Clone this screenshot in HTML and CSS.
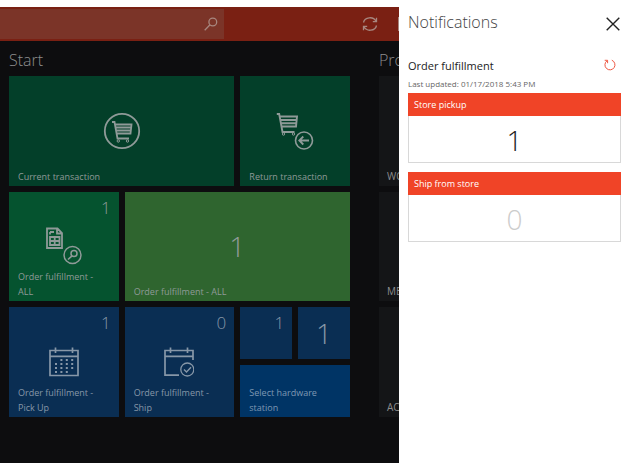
FILE: index.html
```html
<!DOCTYPE html>
<html lang="en">
<head>
<meta charset="utf-8">
<meta name="viewport" content="width=device-width, initial-scale=1">
<title>Store operations</title>
<link rel="stylesheet" href="styles.css">
</head>
<body>
<div class="app">
  <header class="topbar">
    <form class="search">
      <input class="search-input" type="search" aria-label="Search">
      <button class="search-button" type="submit" aria-label="Search">
        <svg width="14" height="14" viewBox="0 0 14 14"><circle cx="8.8" cy="5" r="3.9"/><path d="M6 7.8L.7 13.2"/></svg>
      </button>
    </form>
    <button class="sync" type="button" aria-label="Sync">
      <svg width="16" height="16" viewBox="0 0 16 16"><path d="M1.5 6.5A6.6 5.8 0 0 1 14 5.2M14.5 1.8V5.6H10.8M14.5 9.5A6.6 5.8 0 0 1 2 10.8M1.5 14.2V10.4H5.2"/></svg>
    </button>
    <span class="edge"></span>
  </header>
  <main class="board">
    <section class="group">
      <h2 class="group-title">Start</h2>
      <div class="tiles">
        <button class="tile wide forest" type="button">
          <svg class="icon" width="38" height="38" viewBox="0 0 38 38"><circle cx="19" cy="19" r="17.2" stroke-width="1.8"/><path stroke-width="1.8" d="M9 10H11.5L14.5 26.5H26M12 12.5H28.5L27.5 21.5H14M12.5 15.5H28M13 18.5H27.8"/><circle cx="15.3" cy="29" r="1.2"/><circle cx="24.5" cy="29" r="1.2"/></svg>
          <span class="label">Current transaction</span>
        </button>
        <button class="tile medium forest" type="button">
          <svg class="icon" width="38" height="38" viewBox="0 0 38 38"><path stroke-width="1.9" d="M.8 2H3.2L6.5 20H18.5M3.8 4.5H21L20 14.5H5.5M4.3 8H20.5M5 11.2H20.2"/><circle cx="7.5" cy="22" r="1.2"/><circle cx="17.5" cy="22" r="1.2"/><circle cx="28" cy="28.5" r="8.5" stroke-width="1.6"/><path stroke-width="1.8" d="M33 28.5H23.5M27.3 24.5L23.3 28.5L27.3 32.5"/></svg>
          <span class="label">Return transaction</span>
        </button>
        <button class="tile medium emerald" type="button">
          <span class="count">1</span>
          <svg class="icon" width="38" height="38" viewBox="0 0 38 38"><path stroke-width="1.8" d="M2 1.5H12.5L17 6V21H2ZM12 1.5V6.5H17M5 5H9M5 5V7.5M5 10H14.5V18H5ZM5 14H14.5M9.7 10V18"/><circle cx="27.5" cy="28" r="8.5" stroke-width="1.5"/><circle cx="29" cy="26.5" r="3" stroke-width="1.5"/><path stroke-width="1.6" d="M27 28.8L23 32.5"/></svg>
          <span class="label">Order fulfillment - ALL</span>
        </button>
        <button class="tile wide lime" type="button">
          <span class="figure">1</span>
          <span class="label">Order fulfillment - ALL</span>
        </button>
        <button class="tile medium navy" type="button">
          <span class="count">1</span>
          <svg class="icon" width="30" height="30" viewBox="0 0 30 30"><path stroke-width="1.7" d="M1 3.5H29V28.5H1ZM1 9.3H29M6.5 .5V6M23.5 .5V6"/><path stroke-width="2" stroke-dasharray="2 3.4" d="M11.4 13H25M6 17H25M6 21H25M6 25H20"/></svg>
          <span class="label">Order fulfillment - Pick Up</span>
        </button>
        <button class="tile medium navy" type="button">
          <span class="count">0</span>
          <svg class="icon" width="30" height="30" viewBox="0 0 30 30"><path stroke-width="1.7" d="M15 28.2H1V3.5H29V13M1 9.3H29M6.5 .5V6M23.5 .5V6"/><circle cx="23.3" cy="22.5" r="6.5" stroke-width="1.3"/><path stroke-width="1.4" d="M20 22.5L22.5 25L27 20.3"/></svg>
          <span class="label">Order fulfillment - Ship</span>
        </button>
        <button class="tile small navy" type="button"><span class="count">1</span></button>
        <button class="tile small navy" type="button"><span class="figure">1</span></button>
        <button class="tile short azure" type="button"><span class="label">Select hardware station</span></button>
      </div>
    </section>
    <section class="group cut">
      <h2 class="group-title">Pro</h2>
      <div class="stack">
        <button class="tile slate" type="button"><span class="label">WO</span></button>
        <button class="tile slate" type="button"><span class="label">ME</span></button>
        <button class="tile slate" type="button"><span class="label">AC</span></button>
      </div>
    </section>
  </main>
</div>
<aside class="panel">
  <header class="panel-head">
    <h1 class="panel-title">Notifications</h1>
    <button class="close" type="button" aria-label="Close">
      <svg width="14" height="14" viewBox="0 0 14 14"><path d="M.7 .7L13.3 13.3M13.3 .7L.7 13.3"/></svg>
    </button>
  </header>
  <div class="section-head">
    <h2 class="section-title">Order fulfillment</h2>
    <button class="refresh" type="button" aria-label="Refresh">
      <svg width="12" height="12" viewBox="0 0 12 12"><path d="M7.8 1.2A5 5 0 1 1 3 1.8M.7 1.3H3.6V4.2"/></svg>
    </button>
  </div>
  <p class="updated">Last updated: 01/17/2018 5:43 PM</p>
  <article class="card">
    <h3 class="card-title">Store pickup</h3>
    <p class="card-value">1</p>
  </article>
  <article class="card">
    <h3 class="card-title">Ship from store</h3>
    <p class="card-value none">0</p>
  </article>
</aside>
</body>
</html>
```
FILE: styles.css
```css
* { box-sizing: border-box; }

body {
  display: flex;
  margin: 0;
  min-height: 100vh;
  background: #fff;
  font-family: "Open Sans", "Noto Sans", sans-serif;
  font-size: 9px;
}

h1, h2, h3, p { margin: 0; font-weight: 400; }

button {
  padding: 0;
  border: 0;
  background: none;
  color: inherit;
  font: inherit;
  text-align: left;
}

svg { display: block; fill: none; stroke: currentColor; }

.app {
  flex: 1;
  display: flex;
  flex-direction: column;
  min-width: 0;
  padding-top: 7px;
  overflow: hidden;
  color: #8f9a98;
}

.topbar {
  display: flex;
  align-items: center;
  height: 34px;
  background: #7a2013;
  color: #a8877f;
}

.search {
  display: flex;
  align-items: center;
  width: 224px;
  height: 30px;
  padding-right: 6px;
  background: #7b3428;
}

.search-input {
  flex: 1;
  min-width: 0;
  border: 0;
  outline: 0;
  background: none;
  color: inherit;
  font: inherit;
}

.search-button, .sync svg { stroke-width: 1.3; }
.sync { margin-left: 138px; }
.edge { width: 1px; height: 14px; margin-left: auto; background: #a8877f; }

.board {
  flex: 1;
  display: flex;
  gap: 29px;
  padding: 8px 0 0 9px;
  background: #0d0d0f;
}

.group { flex: none; width: 341px; }
.cut { flex: 1; display: flex; flex-direction: column; width: auto; min-width: 0; }

.group-title {
  height: 27px;
  color: #8d8d8e;
  font-size: 16px;
  font-weight: 300;
  line-height: 22px;
}

.tiles {
  display: grid;
  grid-template-columns: repeat(6, 1fr);
  grid-template-rows: repeat(6, 1fr);
  gap: 6px;
  aspect-ratio: 1;
}

.stack {
  display: grid;
  grid-template-rows: repeat(3, 1fr);
  gap: 6px;
  height: 341px;
}

.tile {
  position: relative;
  display: grid;
  place-items: center;
  min-width: 0;
  min-height: 0;
}

.wide { grid-column: span 4; grid-row: span 2; }
.medium { grid-column: span 2; grid-row: span 2; }
.short { grid-column: span 2; }

.forest { background: #033f29; }
.emerald { background: #05532f; }
.lime { background: #2f652f; }
.navy { background: #0a2e53; color: #8797a8; }
.azure { background: #003465; color: #7f98b3; }
.slate { background: #141517; color: #8d8d8e; }

.label {
  position: absolute;
  left: 9px;
  right: 16px;
  bottom: 2px;
  line-height: 15px;
}

.slate .label { left: 8px; right: 0; font-size: 10px; }

.count {
  position: absolute;
  top: 6px;
  right: 8px;
  font-size: 17px;
  font-weight: 300;
  line-height: 20px;
}

.figure { font-size: 28px; font-weight: 300; line-height: 32px; }

.panel {
  flex: none;
  width: 227px;
  padding: 10px 5px 0 9px;
  background: #fff;
  color: #222;
}

.panel-head, .section-head {
  display: flex;
  align-items: center;
  justify-content: space-between;
}

.panel-head { height: 24px; }
.panel-title { color: #444; font-size: 16px; font-weight: 300; }
.close { padding: 4px 1px 0; }
.close svg { stroke-width: 1.4; }
.section-head { height: 20px; margin-top: 21px; }
.section-title { font-size: 11px; }
.refresh { padding-right: 5px; color: #ee5540; }
.updated { color: #666; font-size: 8px; line-height: 18px; }

.card {
  margin-bottom: 9px;
  border: 1px solid #d8d8d8;
  border-top: 0;
}

.card-title {
  margin: 0 -1px;
  padding-left: 6px;
  background: #f04427;
  color: #fff;
  font-size: 9px;
  line-height: 23px;
}

.card-value {
  padding: 3px 0 0;
  font-size: 28px;
  font-weight: 300;
  line-height: 43px;
  text-align: center;
}

.none { color: #ccc; }
```
